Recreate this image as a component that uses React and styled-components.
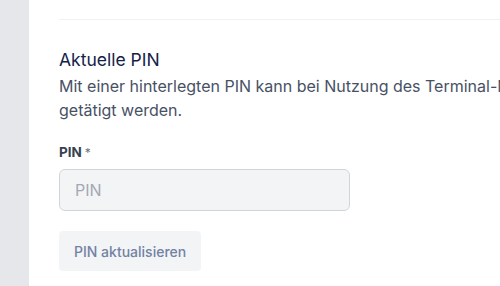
import React from 'react';
import styled, { createGlobalStyle } from 'styled-components';

const GlobalStyle = createGlobalStyle`
  html, body {
    margin: 0;
    padding: 0;
    background: #ffffff;
    overflow: hidden;
  }
  body {
    font-family: Inter, "Noto Sans", sans-serif;
  }
`;

const Page = styled.div`
  display: flex;
  width: 500px;
  height: 286px;
  overflow: hidden;
`;

const Sidebar = styled.div`
  flex: 0 0 29px;
  background: #e5e7eb;
`;

const Main = styled.main`
  flex: 1;
  min-width: 0;
  background: #ffffff;
  padding: 0 0 0 30px;
`;

const Divider = styled.div`
  margin-top: 19px;
  width: 760px;
  border-top: 1px solid #f0f1f3;
`;

const Section = styled.section`
  width: 760px;
  padding-top: 28px;
`;

const Heading = styled.h2`
  margin: 0;
  font-size: 17.5px;
  font-weight: 400;
  line-height: 24px;
  color: #14224a;
`;

const Description = styled.p`
  margin: 2px 0 0;
  font-size: 16px;
  line-height: 24px;
  color: #475165;
  white-space: nowrap;
`;

const Field = styled.div`
  margin-top: 22px;
  display: flex;
  flex-direction: column;
`;

const Label = styled.label`
  font-size: 13.5px;
  font-weight: 700;
  line-height: 16px;
  color: #374151;
`;

const Required = styled.span`
  margin-left: 3px;
  font-size: 12px;
  color: #6b7280;
  font-weight: 400;
`;

const Input = styled.input`
  margin-top: 8px;
  box-sizing: border-box;
  width: 291px;
  height: 42px;
  padding: 0 15px;
  background: #f3f4f6;
  border: 1px solid #d1d5db;
  border-radius: 6px;
  font-family: inherit;
  font-size: 16px;
  color: #374151;
  outline: none;

  &::placeholder {
    color: #a3a8b2;
  }
`;

const Button = styled.button`
  margin-top: 20px;
  height: 40px;
  padding: 0 15px;
  background: #f3f4f6;
  border: none;
  border-radius: 4px;
  font-family: inherit;
  font-size: 14px;
  font-weight: 500;
  color: #7282a3;
  cursor: pointer;
`;

const App = () => (
  <>
    <GlobalStyle />
    <Page>
      <Sidebar />
      <Main>
        <Divider />
        <Section>
          <Heading>Aktuelle PIN</Heading>
          <Description>
            Mit einer hinterlegten PIN kann bei Nutzung des Terminal-Modus eine Zahlung
            <br />
            getätigt werden.
          </Description>
          <Field>
            <Label>
              PIN<Required>*</Required>
            </Label>
            <Input placeholder="PIN" type="password" />
          </Field>
          <Button>PIN aktualisieren</Button>
        </Section>
      </Main>
    </Page>
  </>
);

export default App;
